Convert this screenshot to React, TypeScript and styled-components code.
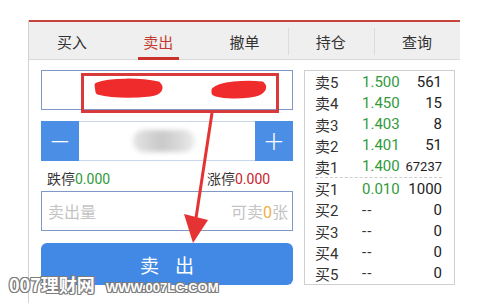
import { FC } from "react";
import styled, { createGlobalStyle } from "styled-components";

const GlobalStyle = createGlobalStyle`
  html, body {
    margin: 0;
    padding: 0;
    background: #fff;
  }
  body {
    font-family: "Noto Sans CJK SC", "Noto Sans", sans-serif;
  }
`;

const StyledPage = styled.div`
  position: relative;
  width: 489px;
  height: 303px;
  overflow: hidden;
  background: #fff;
`;

const StyledFrame = styled.div`
  margin: 20px 0 0 28px;
  width: 432px;
  height: 283px;
  box-sizing: border-box;
  border-left: 1px solid #d2d2d2;
`;

const StyledTabBar = styled.div`
  display: flex;
  height: 40px;
  box-sizing: border-box;
  border-top: 2px solid #c9433d;
  border-bottom: 1px solid #dadada;
  background: #efefef;
`;

const StyledTab = styled.div<{ $active?: boolean }>`
  flex: 1;
  position: relative;
  display: flex;
  align-items: center;
  justify-content: center;
  padding-top: 2px;
  font-size: 15px;
  color: ${(p) => (p.$active ? "#c43a33" : "#333")};

  & + &::before {
    content: "";
    position: absolute;
    left: 0;
    top: 6px;
    bottom: 4px;
    width: 1px;
    background: #dcdcdc;
  }

  &::after {
    content: "";
    display: ${(p) => (p.$active ? "block" : "none")};
    position: absolute;
    left: 50%;
    bottom: -1px;
    width: 41px;
    height: 3px;
    margin-left: -20px;
    background: #c9332c;
  }
`;

const StyledBody = styled.div`
  display: flex;
  gap: 11px;
  padding: 10px 5px 0 12px;
`;

const StyledLeft = styled.div`
  width: 252px;
  display: flex;
  flex-direction: column;
`;

const StyledCodeBox = styled.div`
  height: 40px;
  box-sizing: border-box;
  border: 1px solid #7f98c6;
`;

const StyledStepper = styled.div`
  margin-top: 11px;
  height: 40px;
  display: flex;
`;

const StyledStepButton = styled.div`
  width: 38px;
  display: flex;
  align-items: center;
  justify-content: center;
  background: #4b8ee6;
  color: #fff;
  font-family: "DejaVu Sans", sans-serif;
  font-size: 26px;
  font-weight: 300;
`;

const StyledStepValue = styled.div`
  flex: 1;
  display: flex;
  align-items: center;
  justify-content: center;
  box-sizing: border-box;
  border-top: 1px solid #c8d6ec;
  border-bottom: 1px solid #c8d6ec;
`;

const StyledBlurredValue = styled.div`
  width: 62px;
  height: 22px;
  margin-left: -6px;
  border-radius: 11px;
  background: linear-gradient(90deg, #e4e4e4, #c9c9c9 45%, #d6d6d6 70%, #ececec);
  filter: blur(2.5px);
`;

const StyledLimitRow = styled.div`
  height: 30px;
  display: grid;
  grid-template-columns: 160px 1fr;
  align-items: center;
  padding: 3px 0 0 6px;
  box-sizing: border-box;
  font-size: 14px;
  color: #333;
`;

const StyledNumber = styled.span<{ $color: string }>`
  font-family: Roboto, "Liberation Sans", sans-serif;
  color: ${(p) => p.$color};
`;

const StyledQtyBox = styled.div`
  height: 40px;
  box-sizing: border-box;
  border: 1px solid #7f98c6;
  display: flex;
  align-items: center;
  justify-content: space-between;
  padding: 0 4px 0 6px;
  font-size: 16px;
  color: #c4c4c4;
`;

const StyledAvailable = styled.span`
  font-family: Roboto, "Liberation Sans", sans-serif;
  color: #eab243;
`;

const StyledSellButton = styled.div`
  margin-top: 12px;
  height: 42px;
  border-radius: 6px;
  background: #4189e4;
  display: flex;
  align-items: center;
  justify-content: center;
  padding-left: 16px;
  color: #fff;
  font-size: 19px;
  letter-spacing: 16px;
`;

const StyledBook = styled.div`
  width: 151px;
  height: 215px;
  box-sizing: border-box;
  border: 1px solid #cfcfcf;
  display: flex;
  flex-direction: column;
  padding: 0 12px 0 10px;
`;

const StyledBookRow = styled.div<{ $split?: boolean }>`
  flex: 1;
  display: grid;
  grid-template-columns: 47px 1fr auto;
  align-items: center;
  border-top: ${(p) => (p.$split ? "1px dashed #cccccc" : "none")};
`;

const StyledBookLabel = styled.span`
  font-size: 15px;
  color: #333;
  span {
    font-family: Roboto, "Liberation Sans", sans-serif;
  }
`;

const StyledBookPrice = styled.span<{ $empty?: boolean }>`
  font-family: Roboto, "Liberation Sans", sans-serif;
  font-size: 15px;
  color: ${(p) => (p.$empty ? "#333" : "#329a3c")};
  letter-spacing: ${(p) => (p.$empty ? "1px" : "0")};
`;

const StyledBookQty = styled.span<{ $small?: boolean }>`
  font-family: Roboto, "Liberation Sans", sans-serif;
  font-size: ${(p) => (p.$small ? "13px" : "15px")};
  color: #222;
  text-align: right;
`;

const StyledOverlay = styled.svg`
  position: absolute;
  left: 0;
  top: 0;
  pointer-events: none;
`;

const StyledWatermark = styled.div`
  position: absolute;
  left: 9px;
  top: 271px;
  display: flex;
  align-items: baseline;
  gap: 11px;
  color: #fff;
  font-weight: bold;
  text-shadow: 1px 0 0 #7d7d7d, -1px 0 0 #7d7d7d, 0 1px 0 #7d7d7d, 0 -1px 0 #7d7d7d,
    1px 1px 0 #7d7d7d, -1px -1px 0 #7d7d7d, 1px -1px 0 #7d7d7d, -1px 1px 0 #7d7d7d;
`;

const StyledWatermarkName = styled.span`
  font-size: 18px;
`;

const StyledWatermarkUrl = styled.span`
  font-family: "Liberation Sans", sans-serif;
  font-size: 13px;
`;

const tabs = ["买入", "卖出", "撤单", "持仓", "查询"];

const book = [
  { label: "卖", n: 5, price: "1.500", qty: "561" },
  { label: "卖", n: 4, price: "1.450", qty: "15" },
  { label: "卖", n: 3, price: "1.403", qty: "8" },
  { label: "卖", n: 2, price: "1.401", qty: "51" },
  { label: "卖", n: 1, price: "1.400", qty: "67237" },
  { label: "买", n: 1, price: "0.010", qty: "1000" },
  { label: "买", n: 2, price: "--", qty: "0" },
  { label: "买", n: 3, price: "--", qty: "0" },
  { label: "买", n: 4, price: "--", qty: "0" },
  { label: "买", n: 5, price: "--", qty: "0" },
];

const Annotations: FC = () => (
  <StyledOverlay width="489" height="303" viewBox="0 0 489 303">
    <rect x="82.5" y="74.5" width="195" height="37" fill="none" stroke="#d8393b" strokeWidth="3" />
    <path
      d="M97 85 C110 80 140 80 158 84 C162 88 160 93 150 94 C130 96 110 95 98 92 Z"
      fill="#ef2b2b"
      stroke="#ef2b2b"
      strokeWidth="5"
      strokeLinejoin="round"
    />
    <path
      d="M214 90 C220 84 245 82 262 84 C266 88 262 94 250 95 C235 97 220 96 214 93 Z"
      fill="#ef2b2b"
      stroke="#ef2b2b"
      strokeWidth="5"
      strokeLinejoin="round"
    />
    <line x1="212" y1="113" x2="196" y2="218" stroke="#e53232" strokeWidth="3" />
    <polygon points="184,214 208,220 193,243" fill="#e53232" />
  </StyledOverlay>
);

const App: FC = () => {
  return (
    <StyledPage>
      <GlobalStyle />
      <StyledFrame>
        <StyledTabBar>
          {tabs.map((t) => (
            <StyledTab key={t} $active={t === "卖出"}>
              {t}
            </StyledTab>
          ))}
        </StyledTabBar>
        <StyledBody>
          <StyledLeft>
            <StyledCodeBox />
            <StyledStepper>
              <StyledStepButton>−</StyledStepButton>
              <StyledStepValue>
                <StyledBlurredValue />
              </StyledStepValue>
              <StyledStepButton>+</StyledStepButton>
            </StyledStepper>
            <StyledLimitRow>
              <span>
                跌停<StyledNumber $color="#2f9a3a">0.000</StyledNumber>
              </span>
              <span>
                涨停<StyledNumber $color="#c8232b">0.000</StyledNumber>
              </span>
            </StyledLimitRow>
            <StyledQtyBox>
              <span>卖出量</span>
              <span>
                可卖<StyledAvailable>0</StyledAvailable>张
              </span>
            </StyledQtyBox>
            <StyledSellButton>卖出</StyledSellButton>
          </StyledLeft>
          <StyledBook>
            {book.map((r, i) => (
              <StyledBookRow key={i} $split={i === 5}>
                <StyledBookLabel>
                  {r.label}
                  <span>{r.n}</span>
                </StyledBookLabel>
                <StyledBookPrice $empty={r.price === "--"}>{r.price}</StyledBookPrice>
                <StyledBookQty $small={r.qty.length > 4}>{r.qty}</StyledBookQty>
              </StyledBookRow>
            ))}
          </StyledBook>
        </StyledBody>
      </StyledFrame>
      <Annotations />
      <StyledWatermark>
        <StyledWatermarkName>007理财网</StyledWatermarkName>
        <StyledWatermarkUrl>WWW.007LC.COM</StyledWatermarkUrl>
      </StyledWatermark>
    </StyledPage>
  );
};

export default App;
